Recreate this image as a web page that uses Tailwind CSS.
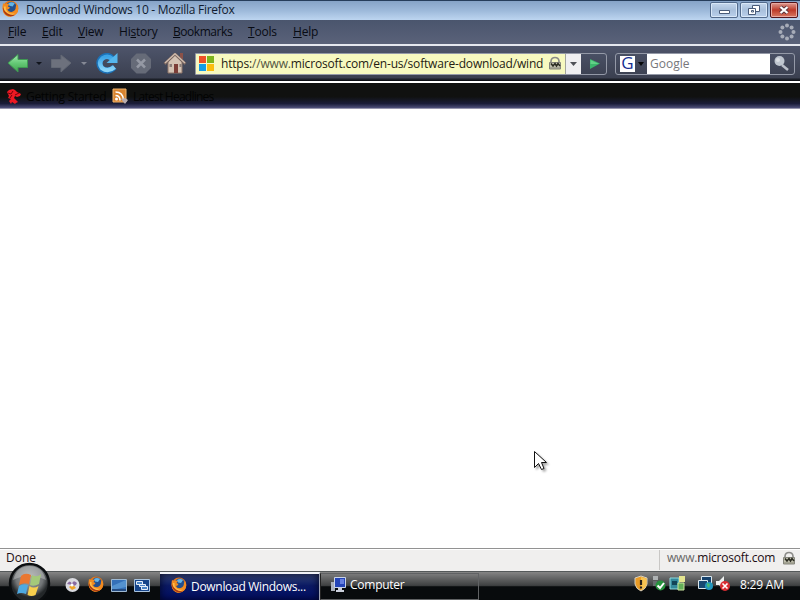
<!DOCTYPE html>
<html lang="en">

<head>
  <meta charset="UTF-8">
  <meta name="viewport" content="width=device-width, initial-scale=1.0">
  <title>Download Windows 10 - Mozilla Firefox</title>
  <script src="https://cdn.jsdelivr.net/npm/@tailwindcss/browser@4"></script>
</head>

<body class="relative flex flex-col w-[800px] h-[600px] overflow-hidden bg-white text-[12px] leading-4 font-['Open_Sans','Noto_Sans',sans-serif]">

  <!-- Shared icons -->
  <svg class="hidden">
    <symbol id="firefox" viewBox="0 0 16 16">
      <circle cx="8" cy="8" r="7.4" fill="#e87817"/>
      <circle cx="8.6" cy="6.6" r="5" fill="#24508e"/>
      <path d="M6 3q3-2 6 0l-2 3-3-.5z" fill="#64b5e6"/>
      <path d="M1 3l2 1q2-1 4 0L5.500 6l2 1-1 1.500-1.500.5q1 2.500 4 2.200 4-.8 4-5.200l1-2q2.600 5-.5 9-4 4.400-9 2Q-.8 12 1 3z" fill="#f28b20"/>
      <path d="M2 6q-1 5 3 7.500 4 2 7-1-4 1-7-1.500Q3 9 3.500 6z" fill="#ffc04a"/>
      <path d="M1 7Q.5 12 5 14.600q4 1.500 7-.6-4 .6-7-1.500Q2 10.500 1 7z" fill="#ad3a12"/>
    </symbol>
    <symbol id="lock" viewBox="0 0 14 14">
      <path d="M3 7V5Q3.500 1.500 7 1.500T11 5v2" fill="none" stroke="#8b8b88" stroke-width="1.600"/>
      <path d="M1.500 6.500h11v6.500h-11z" fill="#c1c0ae" stroke="#85857c"/>
      <path d="M3 7.500l2 2.500 2-2.500 1.500 2.500 1.500-2.500 2 2.500" fill="none" stroke="#292a20" stroke-width="1.500"/>
      <path d="M2 12h10" stroke="#8d8d7f"/>
    </symbol>
  </svg>

  <!-- Title bar -->
  <header class="flex h-5 shrink-0 border-t border-[#263d5b] bg-linear-to-b from-[#86a3c7] via-[#9db9da] to-[#bdd5f0]">
    <svg class="w-[17px] h-[17px] ml-[2px] -mt-px"><use href="#firefox"/></svg>
    <h1 class="ml-[7px] w-[220px] mt-px text-[#101b30] whitespace-nowrap tracking-[-0.28px]">Download Windows 10 - Mozilla Firefox</h1>
    <div class="ml-auto mr-[2px] flex gap-[2px] h-4 mt-px">
      <button class="w-7 rounded-[2px] border border-[#536b8c] bg-linear-to-b from-[#c5d7ec] via-[#a8bfdb] to-[#bad0eb] shadow-[inset_0_0_0_1px_#d9e8f8]">
        <svg class="w-[26px] h-3.5" fill="#fff" stroke="#485b79"><path d="M8.500 7.500h10v3h-10z"/></svg>
      </button>
      <button class="w-7 rounded-[2px] border border-[#536b8c] bg-linear-to-b from-[#c5d7ec] via-[#a8bfdb] to-[#bad0eb] shadow-[inset_0_0_0_1px_#d9e8f8]">
        <svg class="w-[26px] h-3.5" fill="#fff" stroke="#485b79"><path d="M11.500 2.500h7v6h-7z"/><path d="M7.500 5.500h7v6h-7z"/><path d="M10.500 7.500h2v1.500h-2z"/></svg>
      </button>
      <button class="w-7 rounded-[2px] border border-[#53141b] bg-linear-to-b from-[#dc9a92] via-[#bd3828] to-[#d77863] shadow-[inset_0_0_0_1px_#eaa9a0]">
        <svg class="w-[26px] h-3.5" fill="none"><path d="M9.500 4l7 6m0-6l-7 6" stroke="#55323b" stroke-width="4"/><path d="M9.500 4l7 6m0-6l-7 6" stroke="#fff" stroke-width="2.300"/></svg>
      </button>
    </div>
  </header>

  <!-- Menu bar -->
  <nav class="flex h-6 shrink-0 pt-1 pl-2 bg-linear-to-b from-[#4a556d] to-[#5a6279] text-[#080b13] tracking-[-0.2px] whitespace-nowrap">
    <span class="w-[34px]"><u>F</u>ile</span>
    <span class="w-9"><u>E</u>dit</span>
    <span class="w-[41px]"><u>V</u>iew</span>
    <span class="w-[54px]">Hi<u>s</u>tory</span>
    <span class="w-[75px] tracking-[-0.45px]"><u>B</u>ookmarks</span>
    <span class="w-[45px]"><u>T</u>ools</span>
    <span><u>H</u>elp</span>
    <svg class="ml-auto mr-1 w-[18px] h-[18px] -mt-px" viewBox="0 0 18 18" fill="#a7acb8">
      <circle cx="9" cy="2.500" r="2"/><circle cx="13.600" cy="4.400" r="2"/><circle cx="15.500" cy="9" r="2"/><circle cx="13.600" cy="13.600" r="2"/>
      <circle cx="9" cy="15.500" r="2"/><circle cx="4.400" cy="13.600" r="2"/><circle cx="2.500" cy="9" r="2"/><circle cx="4.400" cy="4.400" r="2"/>
    </svg>
  </nav>

  <!-- Navigation toolbar -->
  <div class="flex h-[39px] shrink-0 items-start pt-[7px] border-t-2 border-b-2 border-t-[#e5e8ef] border-b-white bg-linear-to-b from-[#4e556b] via-[#3b4050] via-90% to-[#080a0e]">
    <svg class="w-[195px] h-[22px] shrink-0" fill="none">
      <defs>
        <linearGradient id="green" x2="0" y2="1"><stop stop-color="#a4ecb0"/><stop offset=".5" stop-color="#64c875"/><stop offset="1" stop-color="#42a44f"/></linearGradient>
        <linearGradient id="blue" x2="0" y2="1"><stop stop-color="#3ba4e8"/><stop offset="1" stop-color="#8bd4f8"/></linearGradient>
      </defs>
      <path d="M8 10L18 1.500V6.500h9.500v8H18V19z" fill="url(#green)" stroke="#3f9853"/>
      <path d="M36 9h6l-3 3z" fill="#11151d"/>
      <path d="M71 10L61 2v4.500h-9.500v8H61v4.500z" fill="#6d717d" stroke="#636874"/>
      <path d="M81 9h6l-3 3z" fill="#858995"/>
      <path d="M114.500 14Q108 20.500 101.500 15.500q-4.500-6 .5-10.800 6-4 10.500 1" stroke="#1c72b8" stroke-width="6"/>
      <path d="M114.500 14Q108 19.500 102 15q-4-5.500.5-9.700 5.500-3.500 10 1" stroke="url(#blue)" stroke-width="4.500"/>
      <path d="M117.500 0v10h-11z" fill="#55b6ed"/>
      <path d="M136.500.5h9l5.500 5.500v9l-5.500 5.500h-9L131 15V6z" fill="#666b78"/>
      <path d="M137 6.500l8 8m0-8l-8 8" stroke="#9599a4" stroke-width="2.500"/>
      <path d="M180 0h3v6h-3z" fill="#8b5148"/>
      <path d="M168 8.500l7-6.500 7 6.500V20h-14z" fill="#d4c3b4" stroke="#8e7569"/>
      <path d="M164.500 11L175 1l10.500 10" stroke="#78655f" stroke-width="2.800"/>
      <path d="M165 10L175 .8l10 9.200" stroke="#d0bcae" stroke-width="1.400"/>
      <path d="M174 11h4v9h-4z" fill="#7d3f38"/>
      <path d="M169.500 11h2.500v3h-2.500zm10 0h2v3h-2z" fill="#8a7d78"/>
    </svg>

    <!-- Address field -->
    <div class="flex w-[412px] h-[22px] shrink-0 items-center border border-[#9499a7] rounded-r-[3px]">
      <div class="flex w-[369px] h-5 items-center bg-[#f7f9c0]">
        <svg class="ml-[3px] w-4 h-4 shrink-0"><path d="M0 0h7v7H0z" fill="#ef5126"/><path d="M8 0h7v7H8z" fill="#7eb41c"/><path d="M0 8h7v7H0z" fill="#159de6"/><path d="M8 8h7v7H8z" fill="#fbbd0d"/></svg>
        <p class="ml-[6px] w-[327px] shrink-0 whitespace-nowrap text-[#241b12] tracking-[-0.18px]"><span class="text-[#52553f]"><span class="text-[#241b12]">https:</span>//www.</span>microsoft.com/en-us/software-download/wind</p>
        <svg class="w-[14px] h-[14px] shrink-0 -mt-[2px]"><use href="#lock"/></svg>
      </div>
      <div class="flex w-4 h-5 items-center justify-center bg-[#efeff1] border-l border-[#a3a59d]">
        <svg class="w-[7px] h-1"><path d="M0 0h7L3.500 4z" fill="#4f5157"/></svg>
      </div>
      <svg class="ml-2 w-3 h-3"><path d="M1 1l10 4.500L1 11z" fill="#3bb66b"/><path d="M1.500 2v4H10" fill="#62d187"/></svg>
    </div>

    <!-- Search field -->
    <div class="flex ml-2 w-[180px] h-[22px] items-center border border-[#9499a7] rounded-[3px]">
      <div class="flex w-[15px] h-[16px] ml-[4px] items-center justify-center bg-white text-[17px] leading-[14px] pb-[2px] text-[#142d91]">G</div>
      <svg class="w-3 h-4"><path d="M3 6h6L6 10z" fill="#050608"/></svg>
      <div class="flex w-[123px] h-5 items-center bg-white pl-[3px] text-[#77777b]">Google</div>
      <svg class="w-[23px] h-5" fill="none"><path d="M12 11l6 5" stroke="#b9bec8" stroke-width="2.500"/><circle cx="9.500" cy="7" r="5" fill="#bfc6cf"/><circle cx="8" cy="6" r="2" fill="#dce0e4"/></svg>
    </div>
  </div>

  <!-- Bookmarks toolbar -->
  <div class="flex h-[26px] shrink-0 items-center bg-linear-to-b from-[#101110] from-55% via-[#1a1c38] via-82% to-[#50517c] border-b border-[#9695ac] text-[#020303] whitespace-nowrap">
    <svg class="ml-[6px] w-4 h-4"><path d="M1 4l2-2 4-1 2 1 2 2 4 2-1 2-3 1-2-1-1 2 4 4-2 1-1 1-3-2-1 2-2-3 2-2-3-1 1-2z" fill="#ed1923"/><path d="M2 5l3 1 2-3m2 4l4-2M4 10l2-3" fill="none" stroke="#740009"/></svg>
    <span class="ml-1 w-[85px] mt-0.5 tracking-[-0.3px]">Getting Started</span>
    <svg class="w-[17px] h-4 ml-px mt-px" fill="none"><path d="M1 1h13v13H1z" fill="#d98430" stroke="#efb36c"/><circle cx="4.500" cy="11" r="1.500" fill="#fff"/><path d="M3.500 7.500q4.500 0 4.500 5M3.500 4q7.500 0 8 8" stroke="#fff" stroke-width="1.600"/><path d="M9 11l4-1 3 2-3 4z" fill="#b9adb0"/></svg>
    <span class="ml-1 mt-0.5 tracking-[-0.75px]">Latest Headlines</span>
  </div>

  <!-- Page area -->
  <main class="flex-1 bg-white"></main>

  <!-- Status bar -->
  <footer class="flex h-[23px] shrink-0 items-center border-t border-[#929292] bg-[#f0efee] shadow-[inset_0_1px_0_#fff] text-[#1c0d13] whitespace-nowrap">
    <span class="ml-[6px] -mt-[5px]">Done</span>
    <div class="flex items-center ml-auto w-[141px] h-5 border-l border-[#c9c7c5] pl-[7px]">
      <span class="w-[115px] -mt-1 tracking-[-0.2px]"><span class="text-[#666]">www.</span>microsoft.com</span>
      <svg class="w-[14px] h-[14px] -mt-[4px]"><use href="#lock"/></svg>
    </div>
  </footer>

  <!-- Taskbar -->
  <footer class="flex h-[29px] shrink-0 border-t border-[#55595a] bg-linear-to-b from-[#858585] from-0% via-[#3f4142] via-48% to-[#080b0d] to-53% text-white whitespace-nowrap">
    <svg class="ml-[64px] mt-1 w-[90px] h-5" fill="none">
      <circle cx="8.500" cy="9" r="7" fill="#dadbe0"/><path d="M3 8q3-5 5 0 1-5 5-1-1 4-5 2z" fill="#8a6ba0"/><path d="M5 11q4-4 7 1l-4 2z" fill="#eea427"/><circle cx="8" cy="9" r="1.500" fill="#fff"/>
      <use href="#firefox" x="24" width="16" height="16"/>
      <path d="M47.500 3.500h15v12h-15z" fill="#3470b9" stroke="#9eb9d2"/><path d="M48 10l14-6v7l-14 3z" fill="#5492d0"/><path d="M48 14h14" stroke="#244b81" stroke-width="2"/>
      <path d="M70.500 3.500h15v12h-15z" fill="#164489" stroke="#a9c3dd"/><path d="M72.500 5.500h6v3h-6zm3 3h6v2h-6zm2 2h6v3h-6z" fill="#4c85c6" stroke="#e7eef7"/>
    </svg>
    <div class="flex ml-[6px] w-[160px] items-center pl-[11px] border-t-2 border-r border-t-[#f1f2f6] border-r-[#9ea3b2] bg-linear-to-b from-[#3a477c] via-[#0b1963] via-45% to-[#020d68] shadow-[inset_0_0_8px_#02051c]">
      <svg class="w-4 h-4 -mt-1"><use href="#firefox"/></svg>
      <span class="ml-1 -mt-px tracking-[-0.3px]">Download Windows...</span>
    </div>
    <div class="flex w-[159px] h-[27px] mt-px items-center pl-[10px] border border-[#606264] border-l-[#222]">
      <svg class="w-4 h-4 -mt-1"><path d="M0 5h4v9H0z" fill="#a9afba"/><path d="M3.500.5h11v10h-11z" fill="#2444b7" stroke="#c9d4e7"/><path d="M9 2h4v5H9z" fill="#657fe0"/><path d="M7 11h4v2h2v2H5v-2h2z" fill="#cbd0dc"/></svg>
      <span class="ml-[3px] -mt-[3px] tracking-[-0.25px]">Computer</span>
    </div>
    <svg class="ml-auto mt-[3px] w-[98px] h-5" fill="none">
      <path d="M1 3l6-2 6 2v6q-1 5-6 7-5-2-6-7z" fill="#e99b25" stroke="#d7d0be"/><path d="M7 2v13q5-2 5.500-6V3.500z" fill="#f7c351"/><path d="M7 5v5m0 1.500v2" stroke="#28201a" stroke-width="2.200"/>
      <path d="M19 1h5v4h-5z" fill="#aeb2b3"/><path d="M19 6h4v5h-4z" fill="#686d70"/><circle cx="26.500" cy="10.500" r="5" fill="#27923d"/><path d="M23.500 10.500l2.500 2.500 4-5" stroke="#fff" stroke-width="2"/>
      <path d="M36 3h9v11h-9z" fill="#33899b" stroke="#91dadd"/><path d="M38 6h5v4h-5z" fill="#124457"/><path d="M45 1h6v6h-6z" fill="#e4e590"/><path d="M44 8h6v7h-6z" fill="#63ae58" stroke="#c9e49e"/>
      <path d="M67.500 1.500h10v8h-10z" fill="#15416b" stroke="#dce8ee"/><path d="M64.500 5.500h9v8h-9z" fill="#174971" stroke="#dce8ee"/><circle cx="75" cy="11" r="4" fill="#2296bd"/><path d="M73 8l3 1-1 4-2-2z" fill="#45ba73"/>
      <path d="M82 6h3l5-5v14l-5-5h-3z" fill="#edf0ef"/><circle cx="91" cy="11" r="5" fill="#d92c32"/><path d="M88.500 8.500l5 5m0-5l-5 5" stroke="#fff" stroke-width="1.600"/>
    </svg>
    <time class="ml-[8px] w-[60px] mt-[5px] tracking-[-0.2px]">8:29 AM</time>
  </footer>

  <!-- Start button overlaps the status bar -->
  <svg class="absolute left-[7px] top-[562px] w-11 h-[38px]" fill="none">
    <defs>
      <radialGradient id="orb" cy=".35"><stop stop-color="#a8aaa9"/><stop offset=".7" stop-color="#707476"/><stop offset="1" stop-color="#232729"/></radialGradient>
    </defs>
    <circle cx="22.500" cy="21.500" r="19.500" fill="url(#orb)" stroke="#0b0e10" stroke-width="2.500"/>
    <path d="M6 18Q10 4 22.500 4T39 18Q22 10 6 18z" fill="#d4d7d6" fill-opacity=".4"/>
    <path d="M14 14q4-4 10-1l-2 9q-5-2-10 1z" fill="#e97731"/>
    <path d="M25 13q5 3 9-1l-2 10q-5 3-9 1z" fill="#a4c97a"/>
    <path d="M12 24q4-3 9-1l-2 9q-5-2-9 0z" fill="#4eaae1"/>
    <path d="M22.500 24q4 3 9 0l-3 9q-4 2-8 0z" fill="#f8cf4d"/>
  </svg>

  <!-- Mouse pointer -->
  <svg class="absolute left-[533px] top-[450px] w-4 h-[22px] drop-shadow-[2px_2px_1px_#0005]"><path d="M1.500 1.500v16l4-4 3 6 2.500-1-2.500-6h5z" fill="#fff" stroke="#111"/></svg>

</body>

</html>
